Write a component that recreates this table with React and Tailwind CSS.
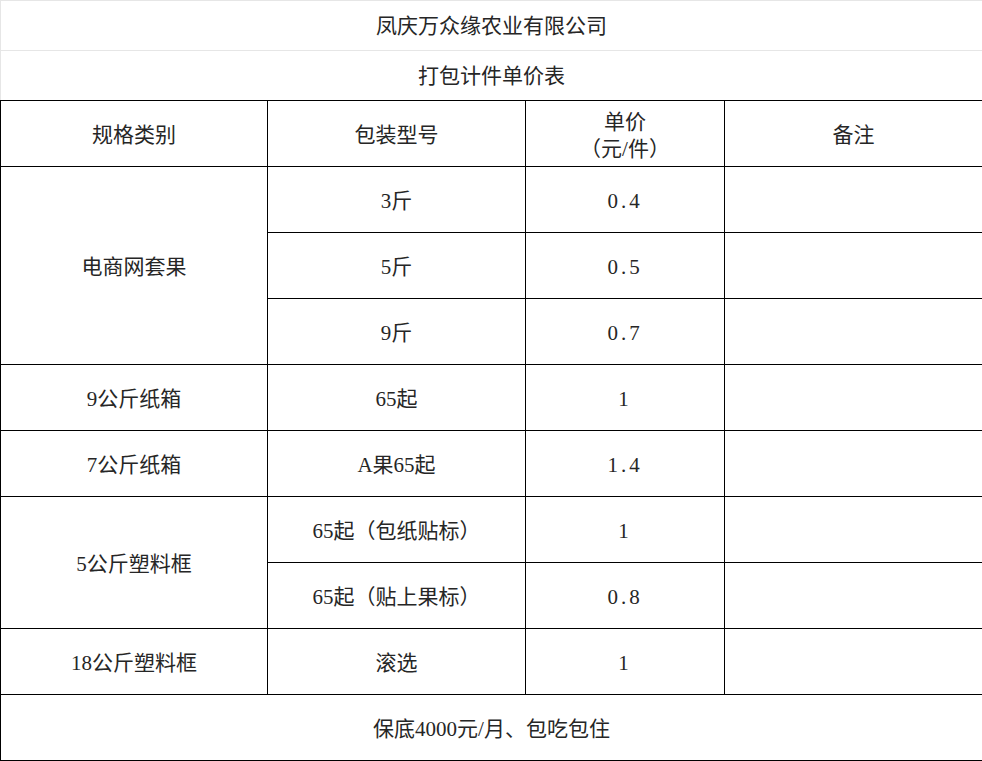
export default function App() {
  const cell = "border border-black text-center align-middle pt-[5px]"
  const price = "tracking-[3px]"
  return (
    <div
      className="w-[982px] h-[761px] bg-white text-[#262626] text-[21px]"
      style={{ fontFamily: '"Liberation Serif", "Noto Sans CJK SC", serif' }}
    >
      <table className="w-[982px] border-collapse table-fixed">
        <colgroup>
          <col className="w-[267px]" />
          <col className="w-[258px]" />
          <col className="w-[199px]" />
          <col className="w-[258px]" />
        </colgroup>
        <tbody>
          <tr className="h-[50px]">
            <td colSpan={4} className="border border-[#e6e6e6] text-center align-middle pt-[3px]">
              凤庆万众缘农业有限公司
            </td>
          </tr>
          <tr className="h-[50px]">
            <td colSpan={4} className="border border-[#e6e6e6] border-b-black text-center align-middle pt-[3px]">
              打包计件单价表
            </td>
          </tr>
          <tr className="h-[66px]">
            <td className={cell}>规格类别</td>
            <td className={cell}>包装型号</td>
            <td className={`${cell} leading-[27px]`}>
              单价
              <br />
              （元/件）
            </td>
            <td className={cell}>备注</td>
          </tr>
          <tr className="h-[66px]">
            <td rowSpan={3} className={cell}>电商网套果</td>
            <td className={cell}>3斤</td>
            <td className={`${cell} ${price}`}>0.4</td>
            <td className={cell}></td>
          </tr>
          <tr className="h-[66px]">
            <td className={cell}>5斤</td>
            <td className={`${cell} ${price}`}>0.5</td>
            <td className={cell}></td>
          </tr>
          <tr className="h-[66px]">
            <td className={cell}>9斤</td>
            <td className={`${cell} ${price}`}>0.7</td>
            <td className={cell}></td>
          </tr>
          <tr className="h-[66px]">
            <td className={cell}>9公斤纸箱</td>
            <td className={cell}>65起</td>
            <td className={`${cell} ${price}`}>1</td>
            <td className={cell}></td>
          </tr>
          <tr className="h-[66px]">
            <td className={cell}>7公斤纸箱</td>
            <td className={cell}>A果65起</td>
            <td className={`${cell} ${price}`}>1.4</td>
            <td className={cell}></td>
          </tr>
          <tr className="h-[66px]">
            <td rowSpan={2} className={cell}>5公斤塑料框</td>
            <td className={cell}>65起（包纸贴标）</td>
            <td className={`${cell} ${price}`}>1</td>
            <td className={cell}></td>
          </tr>
          <tr className="h-[66px]">
            <td className={cell}>65起（贴上果标）</td>
            <td className={`${cell} ${price}`}>0.8</td>
            <td className={cell}></td>
          </tr>
          <tr className="h-[66px]">
            <td className={cell}>18公斤塑料框</td>
            <td className={cell}>滚选</td>
            <td className={`${cell} ${price}`}>1</td>
            <td className={cell}></td>
          </tr>
          <tr className="h-[66px]">
            <td colSpan={4} className={cell}>
              保底4000元/月、包吃包住
            </td>
          </tr>
        </tbody>
      </table>
    </div>
  )
}
